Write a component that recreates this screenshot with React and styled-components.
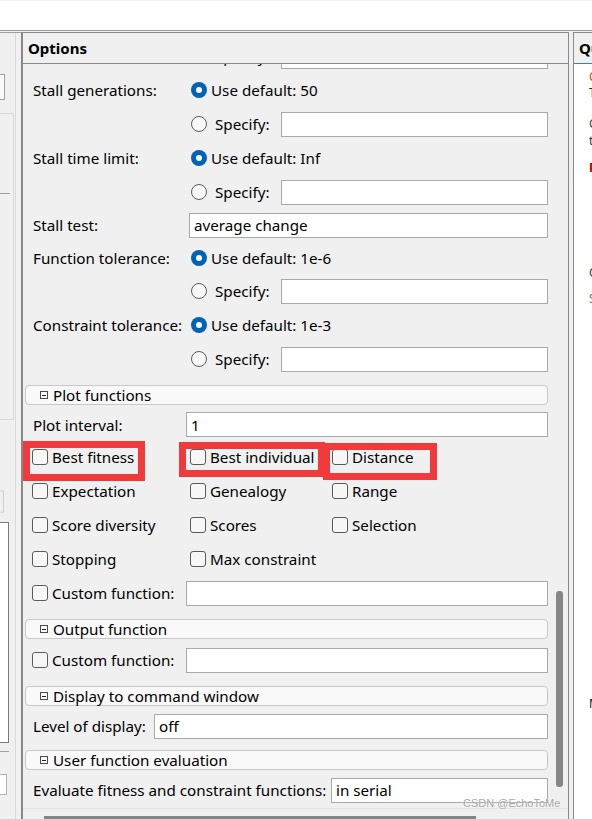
import React from 'react'
import styled, { createGlobalStyle } from 'styled-components'

const GlobalStyle = createGlobalStyle`
  html, body { margin: 0; padding: 0; }
  body {
    width: 592px;
    height: 819px;
    overflow: hidden;
    background: #f0f0f0;
    font-family: "Noto Sans", "Open Sans", sans-serif;
    color: #000;
  }
`

const Page = styled.div`
  position: relative;
  width: 592px;
  height: 819px;
  display: flex;
  flex-direction: column;
  overflow: hidden;
`

const TopBar = styled.div`
  height: 29px;
  flex-shrink: 0;
  background: #fff;
  border-top: 1px solid #f1f0f5;
  border-bottom: 1px solid #9a9a9a;
`

const Main = styled.div`
  flex: 1;
  min-height: 0;
  display: flex;
  padding-top: 1px;
  overflow: hidden;
`

/* ---------- left strip ---------- */

const LeftPanel = styled.div`
  width: 22px;
  flex-shrink: 0;
  box-sizing: border-box;
  border-top: 1px solid #a0a0a0;
  border-right: 1px solid #868686;
  display: flex;
`

const LeftDecor = styled.div`
  width: 15px;
  border-right: 1px solid #dadada;
  display: flex;
  flex-direction: column;
`

const LeftBox = styled.div`
  width: ${p => p.$w}px;
  height: ${p => p.$h}px;
  margin-top: ${p => p.$mt}px;
  box-sizing: border-box;
  background: ${p => p.$bg || 'transparent'};
  border: 1px solid ${p => p.$bc || '#a0a0a0'};
  border-left: none;
  border-radius: ${p => p.$r || 0}px;
`

const LeftLine = styled.div`
  width: ${p => p.$w}px;
  height: 1px;
  margin-top: ${p => p.$mt}px;
  background: #a0a0a0;
`

/* ---------- options panel ---------- */

const OptionsPanel = styled.div`
  width: 547px;
  flex-shrink: 0;
  box-sizing: border-box;
  border: 1px solid #8a8a8a;
  border-bottom: none;
  display: flex;
  flex-direction: column;
`

const PanelHeader = styled.div`
  height: 30px;
  flex-shrink: 0;
  border-bottom: 1px solid ${p => p.$line || '#8a8a8a'};
  display: flex;
  align-items: center;
  padding-left: 5px;
  font-size: 15px;
  font-weight: 700;
  white-space: nowrap;
  overflow: hidden;
`

const OptionsBody = styled.div`
  height: 744px;
  flex-shrink: 0;
  display: flex;
  overflow: hidden;
`

const RowsArea = styled.div`
  width: 525px;
  flex-shrink: 0;
  display: flex;
  flex-direction: column;
  overflow: hidden;
`

const VTrack = styled.div`
  flex: 1;
  display: flex;
  justify-content: center;
  padding-left: 2px;
`

const VThumb = styled.div`
  width: 7px;
  height: 196px;
  border-radius: 3px;
  background: #868686;
`

const HTrack = styled.div`
  height: 11px;
  flex-shrink: 0;
  border-top: 1px solid #e2e2e2;
  display: flex;
  align-items: flex-end;
`

const HThumb = styled.div`
  height: 4px;
  width: 432px;
  margin-left: 21px;
  background: #868686;
`

const Row = styled.div`
  height: ${p => p.$h || 34}px;
  margin-top: ${p => p.$mt || 0}px;
  flex-shrink: 0;
  display: flex;
  align-items: center;
  padding-left: ${p => p.$pl || 10}px;
  font-size: 15.2px;
  white-space: nowrap;
`

const Label = styled.div`
  width: ${p => p.$w}px;
  flex-shrink: 0;
`

const RadioDot = styled.span`
  width: 16px;
  height: 16px;
  box-sizing: border-box;
  border-radius: 50%;
  flex-shrink: 0;
  display: flex;
  align-items: center;
  justify-content: center;
  ${p => p.$on
    ? 'background: #0063b8; &::after { content: ""; width: 6px; height: 6px; border-radius: 50%; background: #fff; }'
    : 'background: #f8f8f8; border: 1px solid #5c5c5c;'}
`

const OptText = styled.span`
  margin-left: ${p => p.$ml || 4}px;
  width: ${p => (p.$w ? `${p.$w}px` : 'auto')};
  flex-shrink: 0;
`

const Field = styled.div`
  flex: 1;
  height: 25px;
  box-sizing: border-box;
  background: #fff;
  border: 1px solid #a9a9a9;
  display: flex;
  align-items: center;
  padding-left: 4px;
`

const CheckItem = styled.div`
  width: ${p => p.$w}px;
  flex-shrink: 0;
  display: flex;
  align-items: center;
`

const Box = styled.span`
  width: 16px;
  height: 16px;
  box-sizing: border-box;
  border: 1px solid #5a5a5a;
  border-radius: 3px;
  background: #f7f7f7;
  flex-shrink: 0;
`

const Section = styled.div`
  height: 20px;
  margin-top: ${p => p.$mt}px;
  margin-left: 2px;
  flex-shrink: 0;
  box-sizing: border-box;
  border: 1px solid #c8c8c8;
  border-radius: 4px;
  background: #f9f9f9;
  display: flex;
  align-items: center;
  padding-left: 14px;
  font-size: 15.2px;
  white-space: nowrap;
`

const Collapse = styled.span`
  width: 8px;
  height: 8px;
  box-sizing: border-box;
  border: 1px solid #4a4a4a;
  margin-right: 5px;
  display: flex;
  align-items: center;
  justify-content: center;
  &::after {
    content: "";
    width: 4px;
    height: 1px;
    background: #222;
  }
`

/* ---------- right panel ---------- */

const RightPanel = styled.div`
  flex: 1;
  min-width: 0;
  margin-left: 4px;
  box-sizing: border-box;
  border-top: 1px solid #8a8a8a;
  border-left: 1px solid #8a8a8a;
  display: flex;
  flex-direction: column;
  overflow: hidden;
`

const RightBody = styled.div`
  flex: 1;
  background: #fff;
  padding-left: 15px;
  overflow: hidden;
`

const RefLine = styled.div`
  margin-top: ${p => p.$mt}px;
  height: 16px;
  line-height: 16px;
  font-size: 12px;
  white-space: nowrap;
  color: ${p => p.$c};
  font-weight: ${p => (p.$b ? 700 : 400)};
`

/* ---------- overlays ---------- */

const Mark = styled.div`
  position: absolute;
  left: ${p => p.$x}px;
  top: ${p => p.$y}px;
  width: ${p => p.$w}px;
  height: ${p => p.$h}px;
  box-sizing: border-box;
  border: 7px solid #f13a3b;
  pointer-events: none;
`

const Watermark = styled.div`
  position: absolute;
  left: 463px;
  top: 797px;
  font-family: "Liberation Sans", Arial, sans-serif;
  font-size: 11px;
  color: rgba(150, 150, 150, 0.85);
  text-shadow: 0 0 2px #fff;
  pointer-events: none;
`

const Radio = ({ on, children, ml, w }) => (
  <>
    <RadioDot $on={on} />
    <OptText $ml={ml} $w={w}>{children}</OptText>
  </>
)

const Check = ({ w, children }) => (
  <CheckItem $w={w}>
    <Box />
    <OptText>{children}</OptText>
  </CheckItem>
)

const SpecifyRow = ({ mt }) => (
  <Row $mt={mt}>
    <Label $w={158} />
    <Radio ml={8} w={66}>Specify:</Radio>
    <Field />
  </Row>
)

const DefaultRow = ({ label, value, h }) => (
  <Row $h={h}>
    <Label $w={158}>{label}</Label>
    <Radio on>Use default: {value}</Radio>
  </Row>
)

const checks = [
  ['Best fitness', 'Best individual', 'Distance'],
  ['Expectation', 'Genealogy', 'Range'],
  ['Score diversity', 'Scores', 'Selection'],
  ['Stopping', 'Max constraint', null],
]

export default function App() {
  return (
    <Page>
      <GlobalStyle />
      <TopBar />
      <Main>
        <LeftPanel>
          <LeftDecor>
            <LeftBox $w={5} $h={26} $mt={41} $bg="#fafafa" />
            <LeftBox $w={14} $h={307} $mt={13} $bc="#d9d9d9">
              <LeftLine $w={10} $mt={79} />
            </LeftBox>
            <LeftBox $w={4} $h={23} $mt={70} $bc="#cfcfcf" $r={3} />
            <LeftBox $w={9} $h={221} $mt={9} $bg="#fff" $bc="#7a7a7a" />
            <LeftLine $w={9} $mt={8} />
            <LeftBox $w={7} $h={21} $mt={22} $bg="#fff" $bc="#b4b4b4" />
          </LeftDecor>
        </LeftPanel>

        <OptionsPanel>
          <PanelHeader>Options</PanelHeader>
          <OptionsBody>
            <RowsArea>
              <SpecifyRow mt={-25} />
              <DefaultRow label="Stall generations:" value="50" />
              <SpecifyRow />
              <DefaultRow label="Stall time limit:" value="Inf" />
              <SpecifyRow />
              <Row $h={32}>
                <Label $w={156}>Stall test:</Label>
                <Field>average change</Field>
              </Row>
              <DefaultRow label="Function tolerance:" value="1e-6" h={33} />
              <SpecifyRow />
              <DefaultRow label="Constraint tolerance:" value="1e-3" />
              <SpecifyRow />

              <Section $mt={9}><Collapse />Plot functions</Section>
              <Row $h={31} $mt={4}>
                <Label $w={153}>Plot interval:</Label>
                <Field>1</Field>
              </Row>
              {checks.map((cols, i) => (
                <Row key={i} $pl={9}>
                  <Check w={158}>{cols[0]}</Check>
                  <Check w={142}>{cols[1]}</Check>
                  {cols[2] && <Check w={120}>{cols[2]}</Check>}
                </Row>
              ))}
              <Row $pl={9}>
                <Check w={154}>Custom function:</Check>
                <Field />
              </Row>

              <Section $mt={9}><Collapse />Output function</Section>
              <Row $pl={9} $mt={4}>
                <Check w={154}>Custom function:</Check>
                <Field />
              </Row>

              <Section $mt={9}><Collapse />Display to command window</Section>
              <Row $mt={3}>
                <Label $w={121}>Level of display:</Label>
                <Field>off</Field>
              </Row>

              <Section $mt={7}><Collapse />User function evaluation</Section>
              <Row $mt={3}>
                <Label $w={298}>Evaluate fitness and constraint functions:</Label>
                <Field>in serial</Field>
              </Row>
            </RowsArea>
            <VTrack>
              <VThumb style={{ marginTop: 527 }} />
            </VTrack>
          </OptionsBody>
          <HTrack>
            <HThumb />
          </HTrack>
        </OptionsPanel>

        <RightPanel>
          <PanelHeader $line="#3f7fbf">Quick Reference</PanelHeader>
          <RightBody>
            <RefLine $mt={5} $c="#c8500a">Choose a solver</RefLine>
            <RefLine $mt={0} $c="#333">This tool corresponds to</RefLine>
            <RefLine $mt={15} $c="#3a3a6a">Click to expand the section</RefLine>
            <RefLine $mt={1} $c="#333">task.</RefLine>
            <RefLine $mt={11} $c="#b00000" $b>Problem Setup</RefLine>
            <RefLine $mt={89} $c="#1f2f6f">Options</RefLine>
            <RefLine $mt={10} $c="#707070">Specify options</RefLine>
            <RefLine $mt={389} $c="#111">More Information</RefLine>
          </RightBody>
        </RightPanel>
      </Main>

      <Mark $x={23} $y={441} $w={122} $h={40} />
      <Mark $x={179} $y={442} $w={146} $h={35} />
      <Mark $x={323} $y={443} $w={114} $h={37} />
      <Watermark>CSDN @EchoToMe</Watermark>
    </Page>
  )
}
